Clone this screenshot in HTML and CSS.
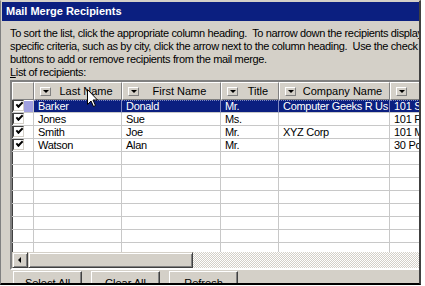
FILE: index.html
```html
<!DOCTYPE html>
<html lang="en">
<head>
    <meta charset="UTF-8">
    <title>Mail Merge Recipients</title>
    <link rel="stylesheet" href="styles.css">
</head>
<body>

    <div class="window">
        <div class="titlebar">Mail Merge Recipients</div>

        <div class="content">
            <div class="intro">
                <div class="line">To sort the list, click the appropriate column heading.&nbsp; To narrow down the recipients displayed by a specific</div>
                <div class="line">specific criteria, such as by city, click the arrow next to the column heading.&nbsp; Use the check box or</div>
                <div class="line">buttons to add or remove recipients from the mail merge.</div>
                <div class="line"><u>L</u>ist of recipients:</div>
            </div>

            <div class="grid">
                <div class="head">
                    <div class="hcell"></div>
                    <div class="hcell"><span class="drop"></span><span class="hlabel">Last Name</span></div>
                    <div class="hcell"><span class="drop"></span><span class="hlabel">First Name</span></div>
                    <div class="hcell"><span class="drop"></span><span class="hlabel">Title</span></div>
                    <div class="hcell"><span class="drop"></span><span class="hlabel">Company Name</span></div>
                    <div class="hcell"><span class="drop"></span><span class="hlabel">Address Line 1</span></div>
                </div>

                <div class="rows">
                    <div class="row selected">
                        <div class="cell check"><span class="box"></span><span class="mark"></span></div>
                        <div class="cell focus">Barker</div>
                        <div class="cell">Donald</div>
                        <div class="cell">Mr.</div>
                        <div class="cell">Computer Geeks R Us</div>
                        <div class="cell">101 Sunset Blvd.</div>
                    </div>
                    <div class="row">
                        <div class="cell check"><span class="box"></span></div>
                        <div class="cell">Jones</div>
                        <div class="cell">Sue</div>
                        <div class="cell">Ms.</div>
                        <div class="cell"></div>
                        <div class="cell">101 Fifth Ave.</div>
                    </div>
                    <div class="row">
                        <div class="cell check"><span class="box"></span></div>
                        <div class="cell">Smith</div>
                        <div class="cell">Joe</div>
                        <div class="cell">Mr.</div>
                        <div class="cell">XYZ Corp</div>
                        <div class="cell">101 Main St.</div>
                    </div>
                    <div class="row">
                        <div class="cell check"><span class="box"></span></div>
                        <div class="cell">Watson</div>
                        <div class="cell">Alan</div>
                        <div class="cell">Mr.</div>
                        <div class="cell"></div>
                        <div class="cell">30 Pond Rd.</div>
                    </div>
                    <div class="row"><div class="cell"></div><div class="cell"></div><div class="cell"></div><div class="cell"></div><div class="cell"></div><div class="cell"></div></div>
                    <div class="row"><div class="cell"></div><div class="cell"></div><div class="cell"></div><div class="cell"></div><div class="cell"></div><div class="cell"></div></div>
                    <div class="row"><div class="cell"></div><div class="cell"></div><div class="cell"></div><div class="cell"></div><div class="cell"></div><div class="cell"></div></div>
                    <div class="row"><div class="cell"></div><div class="cell"></div><div class="cell"></div><div class="cell"></div><div class="cell"></div><div class="cell"></div></div>
                    <div class="row"><div class="cell"></div><div class="cell"></div><div class="cell"></div><div class="cell"></div><div class="cell"></div><div class="cell"></div></div>
                    <div class="row"><div class="cell"></div><div class="cell"></div><div class="cell"></div><div class="cell"></div><div class="cell"></div><div class="cell"></div></div>
                    <div class="row"><div class="cell"></div><div class="cell"></div><div class="cell"></div><div class="cell"></div><div class="cell"></div><div class="cell"></div></div>
                    <div class="row"><div class="cell"></div><div class="cell"></div><div class="cell"></div><div class="cell"></div><div class="cell"></div><div class="cell"></div></div>
                </div>

                <div class="hscroll">
                    <div class="sbtn"><span class="larrow"></span></div>
                    <div class="thumb"></div>
                    <div class="track"></div>
                </div>
            </div>

            <div class="buttons">
                <button class="btn">Select All</button>
                <button class="btn">Clear All</button>
                <button class="btn">Refresh</button>
            </div>
        </div>

        <svg class="cursor" width="12" height="19" viewBox="0 0 12 19">
            <path d="M0.5 0.5 L0.5 15.5 L4 12 L6.5 17.5 L8.5 16.5 L6 11 L10.5 11 Z" fill="#fff" stroke="#000" stroke-width="1"/>
        </svg>
    </div>

</body>
</html>
```

FILE: styles.css
```css
body {
    margin: 0;
    background: #fff;
}
.window {
    position: relative;
    width: 421px;
    height: 285px;
    box-sizing: border-box;
    background: #d4d0c8;
    border-left: 1px solid #808080;
    border-top: 1px solid #d4d0c8;
    border-right: 2px solid #404040;
    border-bottom: 2px solid #000;
    overflow: hidden;
    font-family: "Liberation Sans", Arial, sans-serif;
    font-size: 11px;
    color: #000;
}
.titlebar {
    margin: 1px 0 0 1px;
    height: 19px;
    line-height: 19px;
    padding-left: 4px;
    background: #0b1f80;
    color: #fff;
    font-weight: bold;
    font-size: 11px;
    white-space: nowrap;
}
.content {
    padding: 6px 0 0 9px;
}
.intro .line {
    height: 13px;
    line-height: 13px;
    white-space: nowrap;
    letter-spacing: -0.35px;
}
.grid {
    margin-top: 1px;
    width: 520px;
    border: 2px solid;
    border-color: #808080 #fff #fff #808080;
    box-shadow: inset 1px 1px 0 #404040;
    background: #fff;
}
.head, .row {
    display: grid;
    grid-template-columns: 22px 88px 99px 58px 111px 140px;
}
.hcell {
    display: flex;
    align-items: center;
    height: 18px;
    box-sizing: border-box;
    padding-left: 5px;
    background: #d4d0c8;
    border-top: 1px solid #fff;
    border-left: 1px solid #fff;
    border-right: 1px solid #808080;
    border-bottom: 1px solid #808080;
    white-space: nowrap;
    overflow: hidden;
}
.drop {
    position: relative;
    flex: none;
    width: 11px;
    height: 9px;
    box-sizing: border-box;
    border: 1px solid;
    border-color: #fff #808080 #808080 #fff;
}
.drop::after {
    content: "";
    position: absolute;
    left: 2px;
    top: 2px;
    border-left: 3px solid transparent;
    border-right: 3px solid transparent;
    border-top: 3px solid #000;
}
.hlabel {
    flex: 1;
    text-align: center;
}
.rows {
    height: 152px;
    overflow: hidden;
}
.cell {
    height: 13px;
    line-height: 12px;
    box-sizing: border-box;
    padding-left: 4px;
    border-right: 1px solid #c8c8c8;
    border-bottom: 1px solid #c8c8c8;
    white-space: nowrap;
    overflow: hidden;
    letter-spacing: -0.3px;
}
.cell.check {
    position: relative;
    padding-left: 1px;
}
.box {
    display: block;
    width: 11px;
    height: 11px;
    box-sizing: border-box;
    border: 1px solid #404040;
    border-right-color: #d4d0c8;
    border-bottom-color: #d4d0c8;
    background: #fff;
}
.box::after {
    content: "";
    display: block;
    width: 5px;
    height: 2px;
    margin: 1px 0 0 2px;
    border-left: 2px solid #000;
    border-bottom: 2px solid #000;
    transform: rotate(-45deg);
}
.selected .mark {
    position: absolute;
    left: 12px;
    top: 1px;
    width: 9px;
    height: 11px;
    background: #a0a0e0;
}
.selected .cell:not(.check) {
    background: #0b1f80;
    color: #fff;
    border-right-color: #8088c0;
    border-top: 1px dotted #8088c0;
    line-height: 11px;
}
.hscroll {
    display: flex;
    height: 16px;
    background: #d4d0c8;
}
.sbtn, .thumb {
    box-sizing: border-box;
    height: 16px;
    border: 1px solid;
    border-color: #d4d0c8 #404040 #404040 #d4d0c8;
    box-shadow: inset 1px 1px 0 #fff, inset -1px -1px 0 #808080;
    background: #d4d0c8;
}
.sbtn {
    position: relative;
    width: 16px;
}
.larrow {
    position: absolute;
    left: 5px;
    top: 4px;
    border-top: 3px solid transparent;
    border-bottom: 3px solid transparent;
    border-right: 3px solid #000;
}
.thumb {
    width: 165px;
}
.track {
    flex: 1;
    background: repeating-conic-gradient(#fff 0 25%, #d4d0c8 0 50%) 0 0 / 2px 2px;
}
.buttons {
    display: flex;
    gap: 9px;
    margin: 1px 0 0 3px;
}
.btn {
    width: 69px;
    height: 23px;
    padding: 0;
    font-family: "Liberation Sans", Arial, sans-serif;
    font-size: 11px;
    color: #000;
    background: #d4d0c8;
    border: 1px solid;
    border-color: #fff #404040 #404040 #fff;
    box-shadow: inset -1px -1px 0 #808080;
}
.cursor {
    position: absolute;
    left: 86px;
    top: 88px;
}
```
